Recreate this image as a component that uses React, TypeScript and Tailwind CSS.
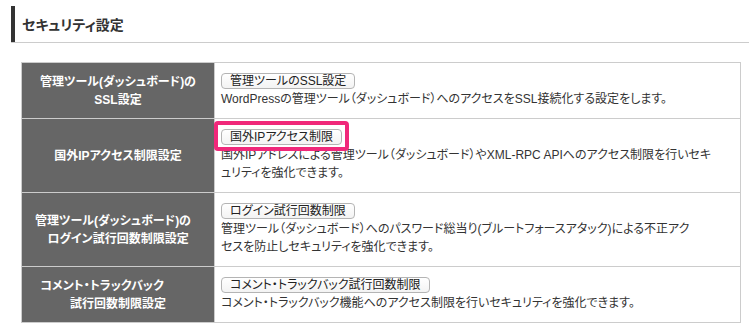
import React from 'react';

type Row = {
  head: string[];
  headClass?: string[];
  button: string;
  desc: string[];
  highlight?: boolean;
};

const ROWS: Row[] = [
  {
    head: ['管理ツール(ダッシュボード)の', 'SSL設定'],
    button: '管理ツールのSSL設定',
    desc: ['WordPressの管理ツール（ダッシュボード）へのアクセスをSSL接続化する設定をします。'],
  },
  {
    head: ['国外IPアクセス制限設定'],
    button: '国外IPアクセス制限',
    desc: [
      '国外IPアドレスによる管理ツール（ダッシュボード）やXML-RPC APIへのアクセス制限を行いセキ',
      'ュリティを強化できます。',
    ],
    highlight: true,
  },
  {
    head: ['管理ツール(ダッシュボード)の', 'ログイン試行回数制限設定'],
    headClass: ['pr-[10px]', ''],
    button: 'ログイン試行回数制限',
    desc: [
      '管理ツール（ダッシュボード）へのパスワード総当り(ブルートフォースアタック)による不正アク',
      'セスを防止しセキュリティを強化できます。',
    ],
  },
  {
    head: ['コメント・トラックバック', '試行回数制限設定'],
    headClass: ['pr-[32px]', ''],
    button: 'コメント・トラックバック試行回数制限',
    desc: ['コメント・トラックバック機能へのアクセス制限を行いセキュリティを強化できます。'],
  },
];

export default function App() {
  return (
    <div className="w-[749px] h-[331px] bg-white pl-[11px] pt-[6px] font-['Liberation_Sans','Noto_Sans_CJK_JP',sans-serif] [font-feature-settings:'palt'] text-[#333]">
      {/* heading */}
      <div className="border-b border-[#ccc]">
        <div className="h-[36px] border-l-4 border-[#333] pl-[7px] flex items-center">
          <h2 className="text-[14px] font-bold leading-none text-[#333] pt-[1px]">セキュリティ設定</h2>
        </div>
      </div>

      {/* settings table */}
      <div className="mt-[19px] ml-[10px] w-[720px] border border-[#ccc]">
        {ROWS.map((row, i) => (
          <div
            key={i}
            className={`grid grid-cols-[192px_1fr] ${i > 0 ? 'border-t border-[#ccc]' : ''}`}
          >
            <div className="bg-[#666] flex flex-col items-center justify-center text-white text-[12px] font-bold leading-[18px]">
              {row.head.map((h, j) => (
                <span key={j} className={row.headClass?.[j] ?? ''}>
                  {h}
                </span>
              ))}
            </div>
            <div className="border-l border-[#ccc] pl-[6px] py-[10px] flex flex-col justify-center">
              <div className="flex">
                <span className="relative">
                  <span className="block h-[16px] px-[8px] border border-[#b4b4b4] rounded-[4px] bg-gradient-to-b from-white to-[#f3f3f3] text-[12px] leading-[14px] text-[#222]">
                    {row.button}
                  </span>
                  {row.highlight && (
                    <span className="absolute -top-[8px] -left-[7px] -right-[7px] -bottom-[6px] border-4 border-[#f0287a] rounded-[4px]" />
                  )}
                </span>
              </div>
              <div className="mt-[1px] text-[12px] leading-[18px] text-[#333]">
                {row.desc.map((d, j) => (
                  <div key={j} className="whitespace-nowrap">
                    {d}
                  </div>
                ))}
              </div>
            </div>
          </div>
        ))}
      </div>
    </div>
  );
}
